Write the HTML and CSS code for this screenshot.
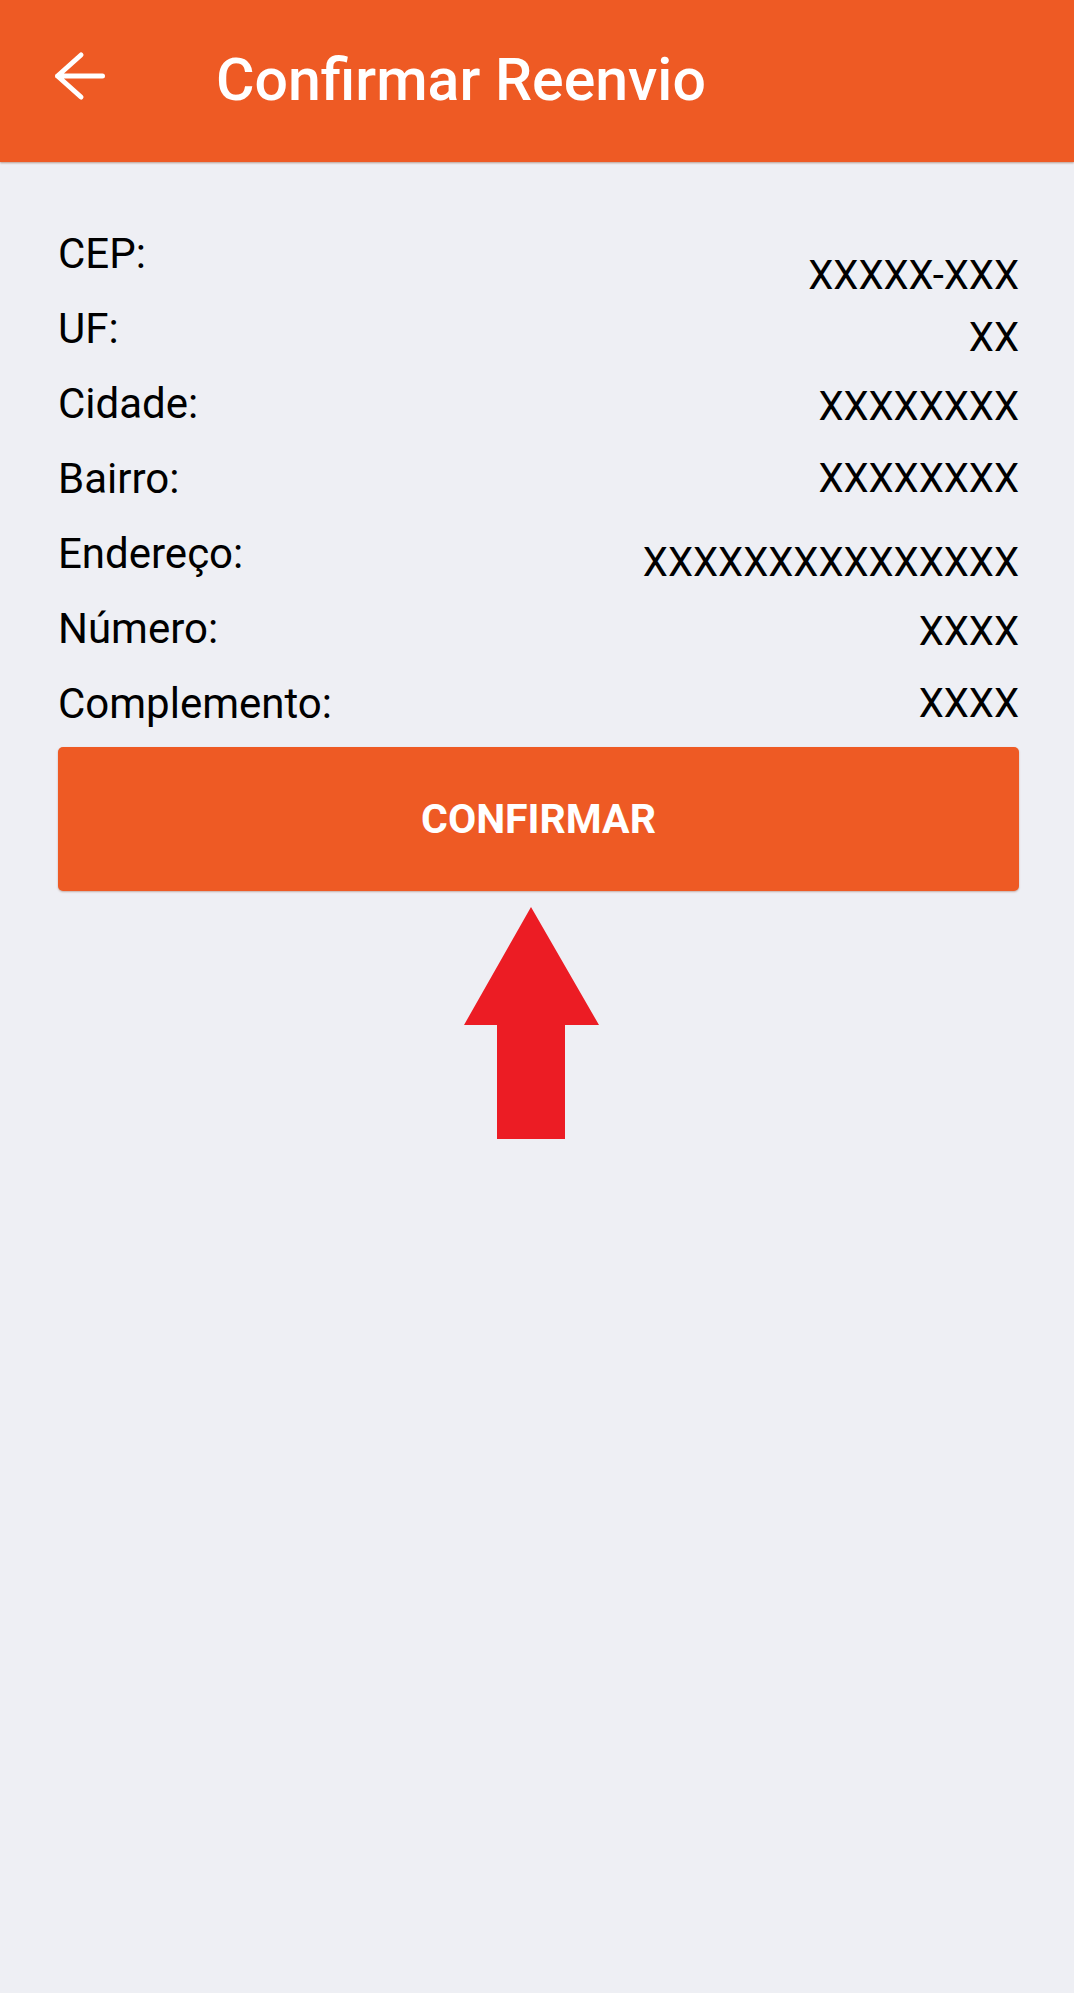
FILE: index.html
```html
<!DOCTYPE html>
<html lang="pt-BR">
<head>
  <meta charset="UTF-8" />
  <meta name="viewport" content="width=device-width, initial-scale=1" />
  <title>Confirmar Reenvio</title>
  <link rel="stylesheet" href="styles.css">
</head>
<body>
  <header class="toolbar">
    <button class="back-btn" title="Voltar">
      <svg width="54" height="52" viewBox="0 0 54 52">
        <path d="M28 4 L4.5 25 L28 46 M4.5 25 H49.5" fill="none" stroke="#fff" stroke-width="5" stroke-linecap="round" stroke-linejoin="round"/>
      </svg>
    </button>
    <h1>Confirmar Reenvio</h1>
  </header>

  <main class="content">
    <div class="address-list">
      <div class="row"><span class="label">CEP:</span><span class="value drop-lg">XXXXX-XXX</span></div>
      <div class="row"><span class="label">UF:</span><span class="value drop-md">XX</span></div>
      <div class="row"><span class="label">Cidade:</span><span class="value drop-sm">XXXXXXXX</span></div>
      <div class="row"><span class="label">Bairro:</span><span class="value">XXXXXXXX</span></div>
      <div class="row"><span class="label">Endereço:</span><span class="value drop-md">XXXXXXXXXXXXXXX</span></div>
      <div class="row"><span class="label">Número:</span><span class="value drop-sm">XXXX</span></div>
      <div class="row"><span class="label">Complemento:</span><span class="value">XXXX</span></div>
    </div>

    <button class="confirm-btn">CONFIRMAR</button>

    <div class="hint-arrow">
      <svg width="136" height="233" viewBox="0 0 136 233">
        <path d="M67 0 L135 118 L101 118 L101 232 L33 232 L33 118 L0 118 Z" fill="#ec1c24"/>
      </svg>
    </div>
  </main>
</body>
</html>
```

FILE: styles.css
```css
body, html {
  margin: 0; padding: 0;
  font-family: Roboto, "Noto Sans", "Liberation Sans", sans-serif;
  background: #eeeff4; color: #000;
}
body { min-height: 1993px; }

.toolbar {
  display: flex; align-items: flex-start;
  height: 162px; box-sizing: border-box;
  padding: 51px 0 0 53px;
  background: #ee5a24;
  box-shadow: 0 1px 2px rgba(120, 50, 20, 0.45);
}
.back-btn {
  background: none; border: none; padding: 0; margin: 0;
  width: 54px; height: 52px; cursor: pointer;
}
.back-btn svg { display: block; }
.toolbar h1 {
  margin: 0 0 0 109px;
  font-size: 59px; line-height: 58px; font-weight: 500;
  color: #fff;
}

.content {
  padding: 54px 55px 0 58px;
}
.row {
  display: flex; justify-content: space-between; align-items: flex-start;
  height: 75px;
}
.label {
  font-size: 42px; line-height: 75px;
}
.value {
  font-size: 40px; line-height: 75px;
}
.drop-sm { padding-top: 3px; }
.drop-md { padding-top: 9px; }
.drop-lg { padding-top: 22px; }

.confirm-btn {
  display: block; width: 100%;
  height: 144px; margin-top: 6px;
  background: #ee5a24; border: none; border-radius: 5px;
  color: #fff; font-family: inherit;
  font-size: 41px; font-weight: 700;
  box-shadow: 0 1px 2px rgba(120, 50, 20, 0.35);
  cursor: pointer;
}

.hint-arrow {
  display: flex; justify-content: center;
  margin-top: 16px; padding-right: 14px;
}
.hint-arrow svg { display: block; }
```
